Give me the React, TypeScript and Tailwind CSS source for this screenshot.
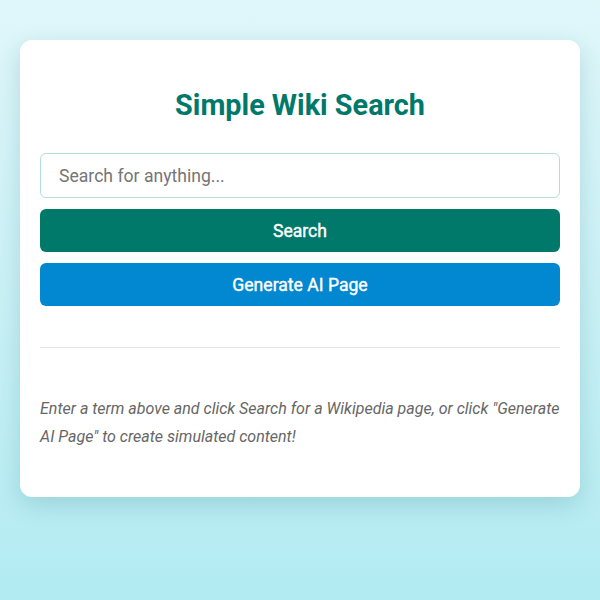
export default function App() {
  return (
    <div className="min-h-[600px] w-full bg-gradient-to-b from-[#e0f7fa] to-[#b2ebf2] px-5 pt-10 font-['Roboto',sans-serif]">
      <div className="rounded-xl bg-white px-5 pt-[48px] pb-[46px] shadow-[0_8px_24px_rgba(0,96,100,0.18)]">
        <h1 className="text-center text-[28.8px] font-bold leading-[34px] text-[#00796b]">Simple Wiki Search</h1>
        <div className="mt-[31px] flex flex-col gap-[11px]">
          <input
            type="text"
            placeholder="Search for anything..."
            className="h-[45px] w-full rounded-md border border-[#b2dfdb] px-[18px] text-[17.6px] text-[#333] placeholder:text-[#757575] outline-none"
          />
          <button className="h-[43px] w-full rounded-md bg-[#00796b] pt-[2px] text-[17.6px] font-normal text-white [-webkit-text-stroke:0.4px_white]">Search</button>
          <button className="h-[43px] w-full rounded-md bg-[#0288d1] pt-[2px] text-[17.6px] font-normal text-white [-webkit-text-stroke:0.4px_white]">Generate AI Page</button>
        </div>
        <hr className="mt-[41px] border-t border-[#e6e6e6]" />
        <p className="mt-[47px] text-[16px] italic leading-[28px] text-[#666]">
          Enter a term above and click Search for a Wikipedia page, or click "Generate AI Page" to create simulated content!
        </p>
      </div>
    </div>
  );
}
